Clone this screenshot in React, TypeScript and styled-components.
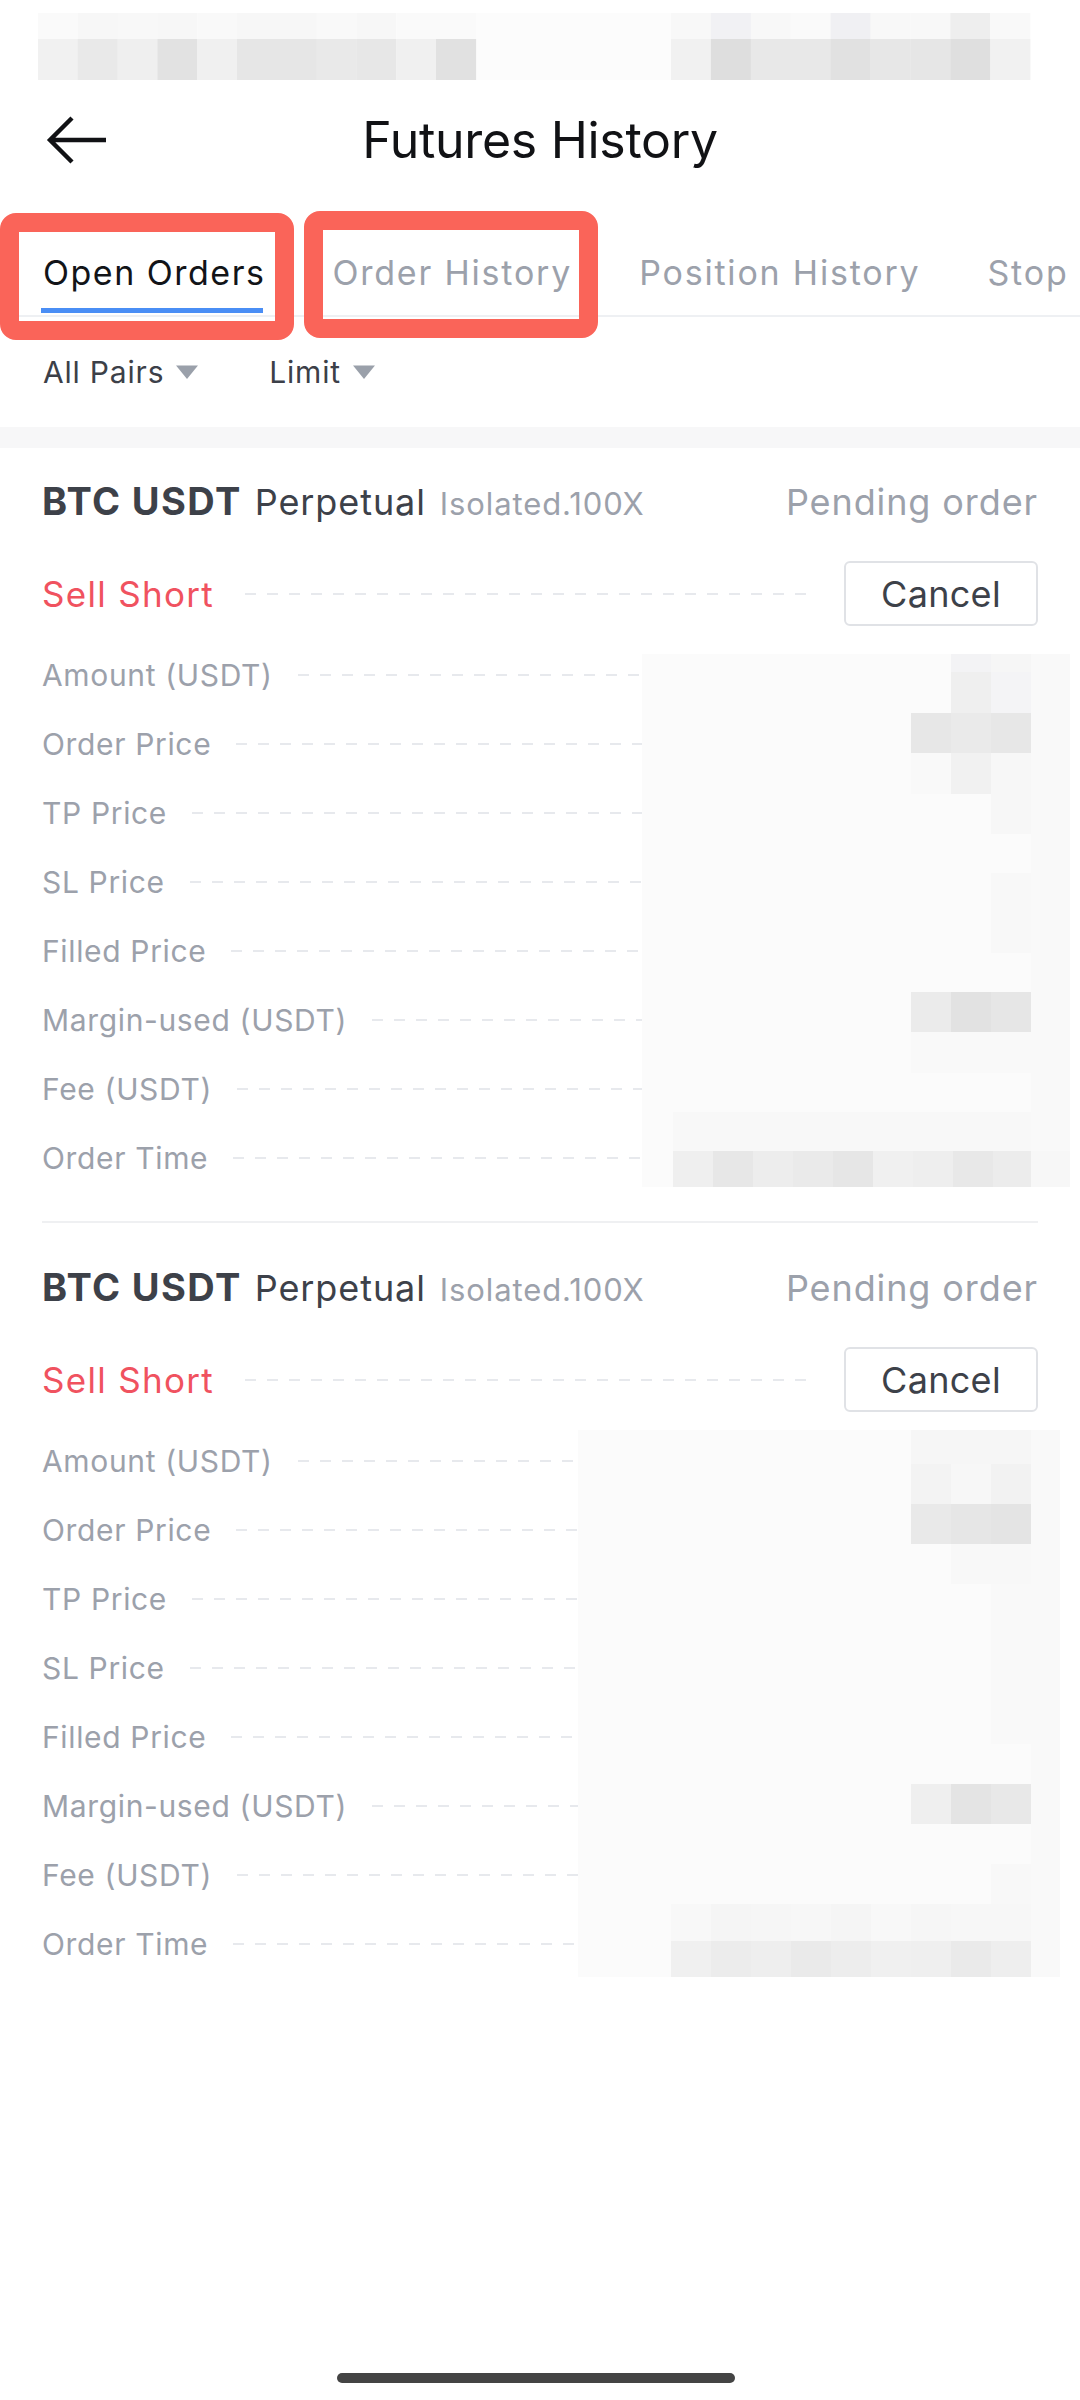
import React from "react";
import styled, { createGlobalStyle } from "styled-components";

type Rect = [number, number, number, number, string];

const GlobalStyle = createGlobalStyle`
  html, body { margin: 0; padding: 0; background: #ffffff; }
  body { font-family: Inter, "Noto Sans", sans-serif; -webkit-font-smoothing: antialiased; }
  * { box-sizing: border-box; }
`;

const Page = styled.div`
  width: 1080px;
  min-height: 2400px;
  background: #ffffff;
  display: flex;
  flex-direction: column;
  overflow: hidden;
`;

const StatusBar = styled.div`
  height: 96px;
  flex-shrink: 0;
  svg { display: block; }
`;

const Header = styled.header`
  height: 88px;
  display: grid;
  grid-template-columns: 1fr auto 1fr;
  align-items: center;
  padding: 0 46px;
`;

const BackButton = styled.button`
  justify-self: start;
  width: 62px;
  height: 52px;
  padding: 0;
  border: 0;
  background: transparent;
  display: flex;
  align-items: center;
  svg { display: block; }
`;

const Title = styled.h1`
  margin: 0;
  font-size: 50px;
  font-weight: 400;
  line-height: 1;
  color: #111215;
  letter-spacing: -0.3px;
`;

const TabsArea = styled.div`
  position: relative;
  padding-top: 66px;
`;

const TabBar = styled.nav`
  display: flex;
  gap: 67px;
  padding: 0 43px;
  border-bottom: 2px solid #eef0f3;
  white-space: nowrap;
  overflow: hidden;
`;

const Tab = styled.div<{ $active?: boolean }>`
  display: flex;
  flex-direction: column;
  flex-shrink: 0;
  font-size: 34px;
  letter-spacing: ${(p) => (p.$active ? 1.5 : 1.8)}px;
  line-height: 46px;
  color: ${(p) => (p.$active ? "#121418" : "#9ca1ab")};
`;

const TabIndicator = styled.span<{ $active?: boolean }>`
  height: 5px;
  margin: 12px 2px 2px -2px;
  background: ${(p) => (p.$active ? "#4a8ef5" : "transparent")};
`;

const Annotation = styled.div<{ $left: number; $top: number }>`
  position: absolute;
  left: ${(p) => p.$left}px;
  top: ${(p) => p.$top}px;
  width: 294px;
  height: 127px;
  border: 19px solid #fa6459;
  border-radius: 16px;
  pointer-events: none;
`;

const FilterRow = styled.div`
  height: 110px;
  display: flex;
  align-items: center;
  gap: 70px;
  padding: 0 43px;
`;

const Filter = styled.div`
  display: flex;
  align-items: center;
  gap: 11px;
  font-size: 30px;
  letter-spacing: 0.8px;
  color: #3c4048;
  svg { display: block; }
`;

const Band = styled.div`
  height: 21px;
  background: #f7f7f8;
`;

const OrderCard = styled.section<{ $first?: boolean }>`
  padding: ${(p) => (p.$first ? 31 : 42)}px 42px 29px;
`;

const CardHeader = styled.div`
  display: flex;
  align-items: baseline;
  height: 44px;
  line-height: 44px;
  white-space: nowrap;
`;

const Pair = styled.span`
  font-size: 38px;
  font-weight: 700;
  letter-spacing: 1.4px;
  color: #3d4149;
`;

const Contract = styled.span`
  margin-left: 13px;
  font-size: 36px;
  letter-spacing: 0.9px;
  color: #3d4149;
`;

const MarginMode = styled.span`
  margin-left: 14px;
  font-size: 31px;
  letter-spacing: 0.9px;
  color: #9ca1ab;
`;

const Status = styled.span`
  margin-left: auto;
  font-size: 36px;
  letter-spacing: 0.9px;
  color: #9ca1ab;
`;

const SideRow = styled.div`
  margin-top: 38px;
  height: 65px;
  display: flex;
  align-items: center;
`;

const Side = styled.span`
  font-size: 35px;
  letter-spacing: 1.3px;
  color: #f0525f;
`;

const Dashes = styled.span<{ $ml: number; $mr?: number }>`
  flex: 1;
  height: 2px;
  margin-left: ${(p) => p.$ml}px;
  margin-right: ${(p) => p.$mr ?? 0}px;
  background: repeating-linear-gradient(90deg, #e7e9ed 0 11px, transparent 11px 22px);
`;

const CancelButton = styled.button`
  width: 194px;
  height: 65px;
  border: 2px solid #e0e2e6;
  border-radius: 6px;
  background: #ffffff;
  font-family: inherit;
  font-size: 36px;
  color: #3d4149;
  letter-spacing: 0.3px;
  padding: 0;
`;

const Rows = styled.div`
  margin-top: 14px;
  position: relative;
`;

const Row = styled.div`
  height: 69px;
  display: flex;
  align-items: center;
`;

const Label = styled.span`
  font-size: 30px;
  letter-spacing: 0.65px;
  color: #9ca1ab;
  white-space: nowrap;
`;

const ValueSlot = styled.span<{ $w: number }>`
  width: ${(p) => p.$w}px;
  flex-shrink: 0;
`;

const Redaction = styled.svg<{ $left: number; $top: number }>`
  position: absolute;
  left: ${(p) => p.$left}px;
  top: ${(p) => p.$top}px;
  display: block;
`;

const Divider = styled.div`
  height: 2px;
  margin: 0 42px;
  background: #eff0f2;
`;

const HomeBar = styled.div`
  width: 398px;
  height: 10px;
  border-radius: 5px;
  background: #444444;
  margin: auto 0 17px 337px;
`;

const statusLeftTop = ["#fafafa", "#f7f7f7", "#f8f8f8", "#f7f7f7", "#f9f9f9", "#f7f7f7", "#f7f7f7", "#f9f9f9", "#f7f7f7", "#fafafa", "#fafafa"];
const statusLeftBottom = ["#f1f1f1", "#e9e9e9", "#efefef", "#e2e2e2", "#f0f0f0", "#e6e6e6", "#e6e6e6", "#e9e9e9", "#e7e7e7", "#f0f0f0", "#e1e1e1"];
const statusRightTop = ["#f8f8f8", "#f1f1f4", "#f8f8f8", "#fafafa", "#f0f0f3", "#f8f8f8", "#f8f8f8", "#eeeeee", "#f9f9f9"];
const statusRightBottom = ["#f1f1f1", "#dedede", "#e8e8e8", "#e8e8e8", "#e1e1e1", "#e7e7e7", "#e6e6e6", "#dfdfdf", "#f1f1f1"];

const statusRects: Rect[] = [
  [475, 13, 196, 67, "#fcfcfc"],
  ...statusLeftTop.map((c, i): Rect => [38 + i * 39.8, 13, 39.8, 26, c]),
  ...statusLeftBottom.map((c, i): Rect => [38 + i * 39.8, 39, 39.8, 41, c]),
  ...statusRightTop.map((c, i): Rect => [671 + i * 39.9, 13, 39.9, 26, c]),
  ...statusRightBottom.map((c, i): Rect => [671 + i * 39.9, 39, 39.9, 41, c]),
];

const timeRow = (x0: number, y: number, h: number, colors: string[]): Rect[] =>
  colors.map((c, i): Rect => [x0 + i * 40, y, 40, h, c]);

const mosaic1: Rect[] = [
  [642, 654, 428, 533, "#fbfbfb"],
  [1031, 654, 39, 533, "#f9f9f9"],
  [951, 654, 40, 18, "#f3f3f5"],
  [991, 654, 40, 18, "#f6f6f6"],
  [951, 672, 40, 41, "#efefef"],
  [991, 672, 40, 41, "#f4f4f6"],
  [911, 713, 40, 40, "#e7e7e7"],
  [951, 713, 40, 40, "#eaeaea"],
  [991, 713, 40, 40, "#e7e7e7"],
  [911, 753, 40, 41, "#f9f9f9"],
  [951, 753, 40, 41, "#f1f1f1"],
  [991, 753, 40, 41, "#f7f7f7"],
  [991, 794, 40, 40, "#f7f7f7"],
  [991, 873, 40, 40, "#f8f8f8"],
  [991, 913, 40, 40, "#f8f8f8"],
  [911, 992, 40, 40, "#ebebeb"],
  [951, 992, 40, 40, "#e2e2e2"],
  [991, 992, 40, 40, "#e6e6e6"],
  [911, 1032, 120, 41, "#f9f9f9"],
  [673, 1112, 358, 39, "#f8f8f8"],
  ...timeRow(673, 1151, 36, ["#efefef", "#e7e7e7", "#ededed", "#eaeaea", "#e6e6e6", "#f0f0f0", "#eeeeee", "#e8e8e8", "#ececec"]),
  [1031, 1151, 39, 36, "#f7f7f7"],
];

const mosaic2: Rect[] = [
  [578, 1430, 482, 547, "#fbfbfb"],
  [1031, 1430, 29, 547, "#f9f9f9"],
  [911, 1430, 120, 34, "#f6f6f6"],
  [911, 1464, 40, 40, "#f3f3f3"],
  [951, 1464, 40, 40, "#f7f7f7"],
  [991, 1464, 40, 40, "#f2f2f2"],
  [911, 1504, 40, 40, "#e9e9e9"],
  [951, 1504, 40, 40, "#e6e6e6"],
  [991, 1504, 40, 40, "#e4e4e4"],
  [951, 1544, 80, 40, "#f8f8f8"],
  [991, 1584, 40, 160, "#f9f9f9"],
  [911, 1784, 40, 40, "#efefef"],
  [951, 1784, 40, 40, "#e4e4e4"],
  [991, 1784, 40, 40, "#e8e8e8"],
  [991, 1864, 40, 40, "#f8f8f8"],
  ...timeRow(671, 1904, 37, ["#f8f8f8", "#f5f5f5", "#f6f6f6", "#f7f7f7", "#f5f5f5", "#f8f8f8", "#f6f6f6", "#f7f7f7", "#f7f7f7"]),
  ...timeRow(671, 1941, 36, ["#f0f0f0", "#ececec", "#eeeeee", "#eaeaea", "#ededed", "#f0f0f0", "#efefef", "#eaeaea", "#eeeeee"]),
];

const MosaicSvg: React.FC<{ rects: Rect[]; box: [number, number, number, number]; left: number; top: number }> = ({ rects, box, left, top }) => (
  <Redaction $left={left} $top={top} width={box[2]} height={box[3]} viewBox={box.join(" ")}>
    {rects.map(([x, y, w, h, fill], i) => (
      <rect key={i} x={x} y={y} width={w} height={h} fill={fill} />
    ))}
  </Redaction>
);

const Caret = () => (
  <svg width="24" height="16" viewBox="0 0 24 16">
    <path d="M1 1.5h22L12 15z" fill="#9aa0aa" />
  </svg>
);

const labels = [
  "Amount (USDT)",
  "Order Price",
  "TP Price",
  "SL Price",
  "Filled Price",
  "Margin-used (USDT)",
  "Fee (USDT)",
  "Order Time",
];

type CardProps = {
  first?: boolean;
  valueWidth: number;
  mosaic: Rect[];
  box: [number, number, number, number];
  mosaicLeft: number;
  mosaicTop: number;
};

const Card: React.FC<CardProps> = ({ first, valueWidth, mosaic, box, mosaicLeft, mosaicTop }) => (
  <OrderCard $first={first}>
    <CardHeader>
      <Pair>BTC USDT</Pair>
      <Contract>Perpetual</Contract>
      <MarginMode>Isolated.100X</MarginMode>
      <Status>Pending order</Status>
    </CardHeader>
    <SideRow>
      <Side>Sell Short</Side>
      <Dashes $ml={31} $mr={38} />
      <CancelButton>Cancel</CancelButton>
    </SideRow>
    <Rows>
      {labels.map((l) => (
        <Row key={l}>
          <Label>{l}</Label>
          <Dashes $ml={25} />
          <ValueSlot $w={valueWidth} />
        </Row>
      ))}
      <MosaicSvg rects={mosaic} box={box} left={mosaicLeft} top={mosaicTop} />
    </Rows>
  </OrderCard>
);

export default function App() {
  return (
    <Page>
      <GlobalStyle />
      <StatusBar>
        <svg width="1080" height="96" viewBox="0 0 1080 96">
          {statusRects.map(([x, y, w, h, fill], i) => (
            <rect key={i} x={x} y={y} width={w + 0.3} height={h} fill={fill} />
          ))}
        </svg>
      </StatusBar>
      <Header>
        <BackButton aria-label="Back">
          <svg width="62" height="52" viewBox="0 0 62 52">
            <path d="M60 26H5M26 4L4 26L26 48" fill="none" stroke="#111215" strokeWidth="4.4" />
          </svg>
        </BackButton>
        <Title>Futures History</Title>
        <span />
      </Header>
      <TabsArea>
        <TabBar>
          <Tab $active>
            Open Orders
            <TabIndicator $active />
          </Tab>
          <Tab>
            Order History
            <TabIndicator />
          </Tab>
          <Tab>
            Position History
            <TabIndicator />
          </Tab>
          <Tab>
            Stop
            <TabIndicator />
          </Tab>
        </TabBar>
        <Annotation $left={0} $top={29} />
        <Annotation $left={304} $top={27} />
      </TabsArea>
      <FilterRow>
        <Filter>
          All Pairs
          <Caret />
        </Filter>
        <Filter>
          Limit
          <Caret />
        </Filter>
      </FilterRow>
      <Band />
      <Card first valueWidth={396} mosaic={mosaic1} box={[642, 654, 428, 533]} mosaicLeft={600} mosaicTop={14} />
      <Divider />
      <Card valueWidth={460} mosaic={mosaic2} box={[578, 1430, 482, 547]} mosaicLeft={536} mosaicTop={4} />
      <HomeBar />
    </Page>
  );
}
